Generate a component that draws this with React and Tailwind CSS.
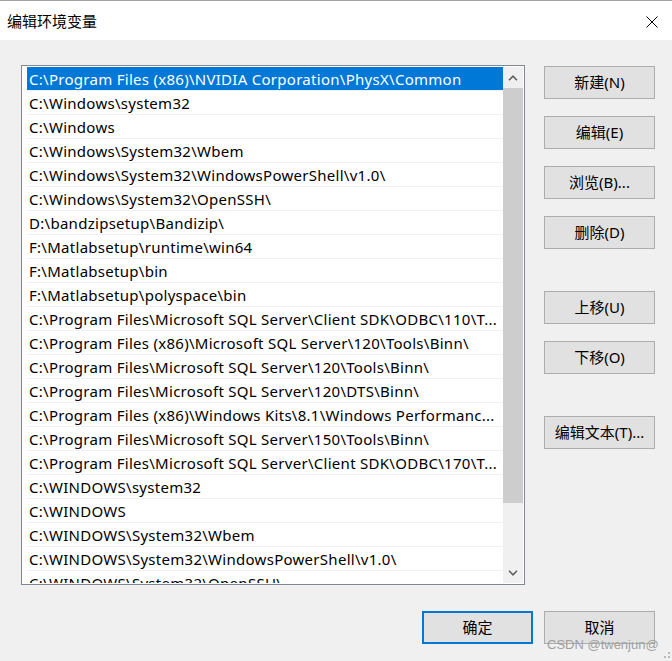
import React from "react";

const paths = [
  "C:\\Program Files (x86)\\NVIDIA Corporation\\PhysX\\Common",
  "C:\\Windows\\system32",
  "C:\\Windows",
  "C:\\Windows\\System32\\Wbem",
  "C:\\Windows\\System32\\WindowsPowerShell\\v1.0\\",
  "C:\\Windows\\System32\\OpenSSH\\",
  "D:\\bandzipsetup\\Bandizip\\",
  "F:\\Matlabsetup\\runtime\\win64",
  "F:\\Matlabsetup\\bin",
  "F:\\Matlabsetup\\polyspace\\bin",
  "C:\\Program Files\\Microsoft SQL Server\\Client SDK\\ODBC\\110\\T...",
  "C:\\Program Files (x86)\\Microsoft SQL Server\\120\\Tools\\Binn\\",
  "C:\\Program Files\\Microsoft SQL Server\\120\\Tools\\Binn\\",
  "C:\\Program Files\\Microsoft SQL Server\\120\\DTS\\Binn\\",
  "C:\\Program Files (x86)\\Windows Kits\\8.1\\Windows Performanc...",
  "C:\\Program Files\\Microsoft SQL Server\\150\\Tools\\Binn\\",
  "C:\\Program Files\\Microsoft SQL Server\\Client SDK\\ODBC\\170\\T...",
  "C:\\WINDOWS\\system32",
  "C:\\WINDOWS",
  "C:\\WINDOWS\\System32\\Wbem",
  "C:\\WINDOWS\\System32\\WindowsPowerShell\\v1.0\\",
  "C:\\WINDOWS\\System32\\OpenSSH\\",
];

function Btn({ children, primary = false }) {
  return (
    <button
      type="button"
      className={
        primary
          ? "w-[111px] h-[33px] bg-[#e1e1e1] border-2 border-[#0078d7] flex items-center justify-center text-[15px] text-black leading-none"
          : "w-[111px] h-[33px] bg-[#e1e1e1] border border-[#adadad] flex items-center justify-center text-[15px] text-black leading-none"
      }
    >
      {children}
    </button>
  );
}

function Chevron({ up }) {
  return (
    <svg width="10" height="6" viewBox="0 0 10 6" className="block">
      {up ? (
        <path d="M1 5.2 L5 1.2 L9 5.2" fill="none" stroke="#606060" strokeWidth="1.6" />
      ) : (
        <path d="M1 0.8 L5 4.8 L9 0.8" fill="none" stroke="#606060" strokeWidth="1.6" />
      )}
    </svg>
  );
}

export default function App() {
  return (
    <div
      className="relative w-[672px] h-[661px] bg-[#f0f0f0] overflow-hidden text-black"
      style={{ fontFamily: '"Noto Sans", "Noto Sans CJK SC", sans-serif' }}
    >
      {/* title bar */}
      <div className="h-px bg-[#a3a3a3]" />
      <div className="h-[39px] bg-white flex items-center justify-between pl-[7px] pr-[14px]">
        <span className="text-[15px] leading-none pb-[1px]" style={{ fontFamily: '"Noto Sans CJK SC", sans-serif' }}>
          编辑环境变量
        </span>
        <svg width="12" height="12" viewBox="0 0 12 12" className="block mt-[2px]">
          <path d="M0.5 0.5 L11.5 11.5 M11.5 0.5 L0.5 11.5" stroke="#000" strokeWidth="1" />
        </svg>
      </div>

      {/* body */}
      <div className="flex pl-[21px] pt-[25px]">
        {/* list box */}
        <div className="w-[504px] h-[520px] bg-white border border-[#828790] pl-[5px] pr-[1px] py-[1px] flex">
          <div className="flex-1 overflow-hidden">
            {paths.map((p, i) => (
              <div key={i} className="h-[24px] border-b border-[#f0f0f0]">
                <div
                  className={
                    i === 0
                      ? "h-[23px] bg-[#0078d7] text-white flex items-center pl-[2px] pt-[2px] whitespace-nowrap overflow-hidden text-[15px] tracking-[0.28px]"
                      : "h-[23px] flex items-center pl-[2px] pt-[2px] whitespace-nowrap overflow-hidden text-[15px] tracking-[0.28px]"
                  }
                >
                  {p}
                </div>
              </div>
            ))}
          </div>
          {/* scrollbar */}
          <div className="w-[20px] bg-[#f0f0f0] flex flex-col">
            <div className="h-[21px] flex items-center justify-center">
              <Chevron up />
            </div>
            <div className="h-[415px] bg-[#cdcdcd]" />
            <div className="flex-1" />
            <div className="h-[20px] flex items-center justify-center">
              <Chevron />
            </div>
          </div>
        </div>

        {/* right buttons */}
        <div className="ml-[19px] mt-[1px] flex flex-col">
          <div className="flex flex-col gap-[17px]">
            <Btn>新建(N)</Btn>
            <Btn>编辑(E)</Btn>
            <Btn>浏览(B)...</Btn>
            <Btn>删除(D)</Btn>
          </div>
          <div className="mt-[42px] flex flex-col gap-[17px]">
            <Btn>上移(U)</Btn>
            <Btn>下移(O)</Btn>
          </div>
          <div className="mt-[42px]">
            <Btn>编辑文本(T)...</Btn>
          </div>
        </div>
      </div>

      {/* bottom buttons */}
      <div className="flex justify-end gap-[11px] pr-[17px] mt-[26px]">
        <Btn primary>确定</Btn>
        <Btn>取消</Btn>
      </div>

      {/* watermark */}
      <div
        className="absolute left-[547px] top-[638px] text-[13px] leading-none text-[#a0a0a0]"
        style={{ fontFamily: '"Liberation Sans", sans-serif' }}
      >
        CSDN @twenjun@
      </div>

      {/* resize grip */}
      <svg width="8" height="7" viewBox="0 0 8 7" className="absolute left-[663px] top-[652px]">
        <rect x="5" y="0" width="2" height="2" fill="#b9b9b9" />
        <rect x="1" y="4" width="2" height="2" fill="#b9b9b9" />
        <rect x="5" y="4" width="2" height="2" fill="#b9b9b9" />
      </svg>
    </div>
  );
}
